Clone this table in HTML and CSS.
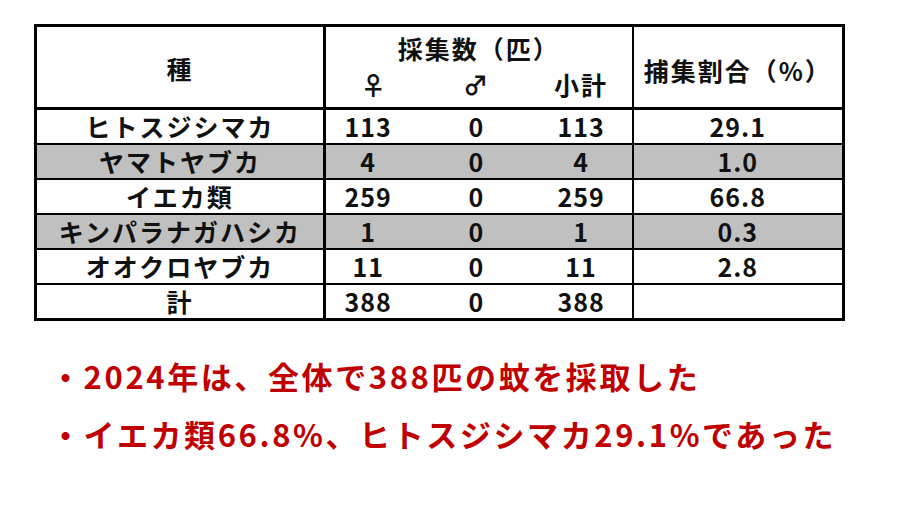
FILE: index.html
```html
<!DOCTYPE html>
<html lang="ja">
<head>
<meta charset="utf-8">
<link rel="stylesheet" href="styles.css">
</head>
<body>
<div class="page">
  <table class="data">
    <colgroup>
      <col class="c-sp"><col class="c-f"><col class="c-m"><col class="c-sub"><col class="c-pct">
    </colgroup>
    <thead>
      <tr class="h1">
        <th rowspan="2" class="sp">種</th>
        <th colspan="3" class="grp">採集数（匹）</th>
        <th rowspan="2" class="pct">捕集割合（%）</th>
      </tr>
      <tr class="h2">
        <th class="sym">♀</th>
        <th class="sym">♂</th>
        <th class="sub">小計</th>
      </tr>
    </thead>
    <tbody>
      <tr><td class="sp">ヒトスジシマカ</td><td class="n">113</td><td>0</td><td class="sub">113</td><td class="pct">29.1</td></tr>
      <tr class="gray"><td class="sp">ヤマトヤブカ</td><td class="n">4</td><td>0</td><td class="sub">4</td><td class="pct">1.0</td></tr>
      <tr><td class="sp">イエカ類</td><td class="n">259</td><td>0</td><td class="sub">259</td><td class="pct">66.8</td></tr>
      <tr class="gray"><td class="sp">キンパラナガハシカ</td><td class="n">1</td><td>0</td><td class="sub">1</td><td class="pct">0.3</td></tr>
      <tr><td class="sp">オオクロヤブカ</td><td class="n">11</td><td>0</td><td class="sub">11</td><td class="pct">2.8</td></tr>
      <tr><td class="sp">計</td><td class="n">388</td><td>0</td><td class="sub">388</td><td class="pct"></td></tr>
    </tbody>
  </table>
  <ul class="notes">
    <li>・2024年は、全体で388匹の蚊を採取した</li>
    <li>・イエカ類66.8%、ヒトスジシマカ29.1%であった</li>
  </ul>
</div>
</body>
</html>
```

FILE: styles.css
```css
html, body {
  margin: 0;
  padding: 0;
  background: #ffffff;
}

.page {
  padding: 24px 0 0 34px;
}

.data {
  border-collapse: collapse;
  table-layout: fixed;
  width: 808px;
  border: 3px solid #000;
  font-family: "Noto Sans CJK JP", "Noto Sans", sans-serif;
  font-weight: 700;
  font-size: 25px;
  color: #111;
}

.c-sp { width: 289px; }
.c-f { width: 98px; }
.c-m { width: 108px; }
.c-sub { width: 102px; }
.c-pct { width: 211px; }

.data th,
.data td {
  padding: 0;
  text-align: center;
  line-height: 1;
  font-weight: 700;
}

.data th {
  letter-spacing: 2px;
}

.data th.sp {
  border-right: 3px solid #000;
  border-bottom: 3px solid #000;
  padding-top: 2px;
}

.data th.pct {
  border-left: 2px solid #000;
  border-bottom: 3px solid #000;
  padding-top: 6px;
}

.h1 { height: 40px; }
.h1 .grp { padding-top: 4px; }
.h2 { height: 43px; }
.h2 th { border-bottom: 3px solid #000; padding-bottom: 4px; }

.data td {
  height: 33px;
  border-bottom: 2px solid #000;
  letter-spacing: 1px;
}

.data td.sp {
  border-right: 3px solid #000;
  letter-spacing: 2px;
}

.data td.n { padding-right: 12px; }

.data td.pct {
  border-left: 2px solid #000;
}

.gray td { background: #c0c0c0; }

.notes {
  list-style: none;
  margin: 37px 0 0 16px;
  padding: 0;
  font-family: "Noto Sans CJK JP", "Noto Sans", sans-serif;
  font-weight: 700;
  font-size: 31px;
  letter-spacing: 2.6px;
  color: #c00000;
}

.notes li {
  height: 58px;
  line-height: 36px;
}
```
